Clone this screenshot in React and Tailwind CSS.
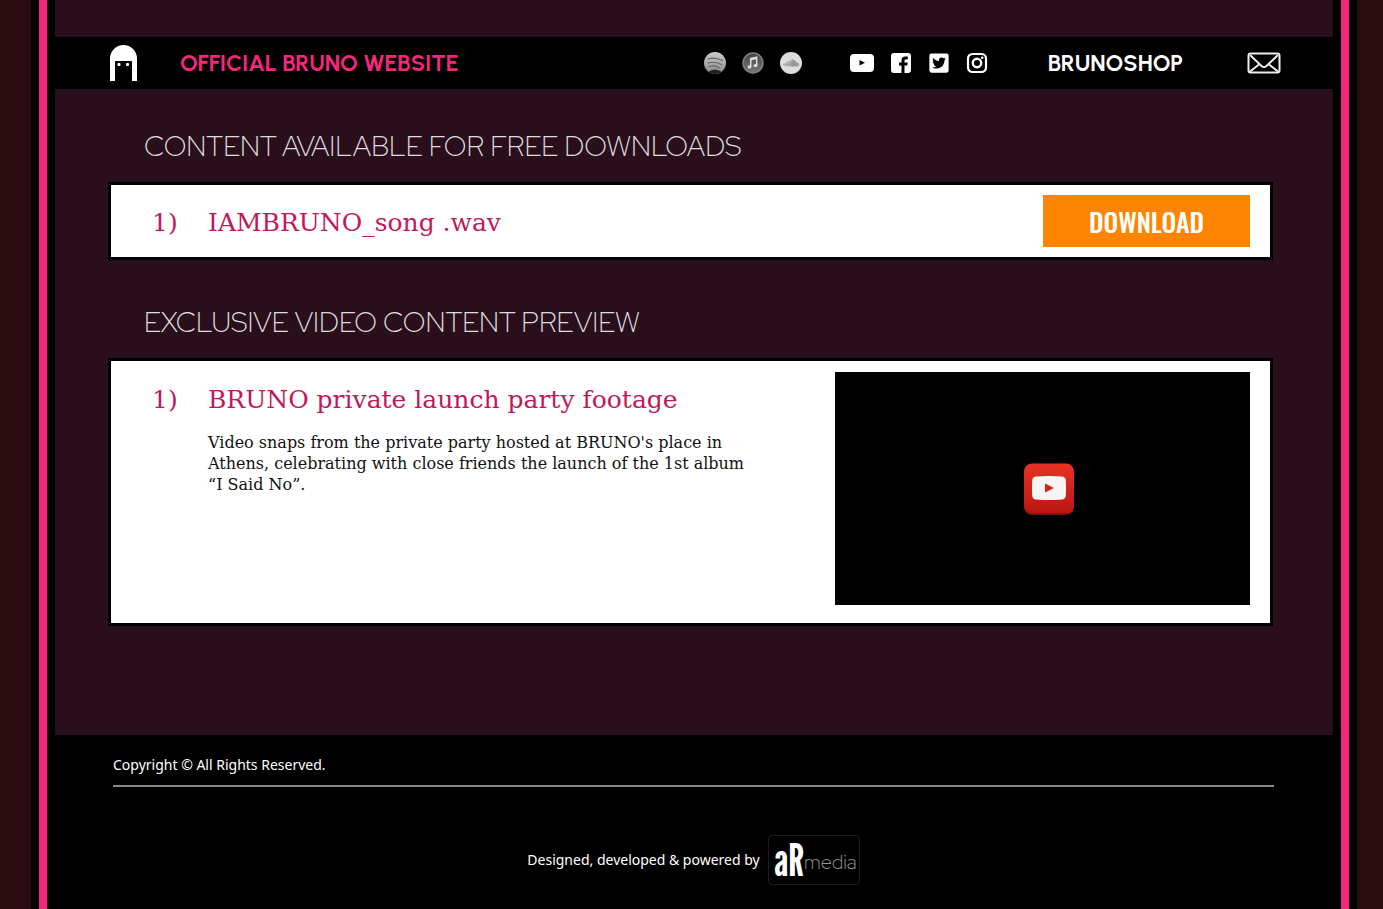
import { FaSoundcloud, FaTwitterSquare } from 'react-icons/fa';

const headingFont = "font-['Red_Hat_Display','Raleway','Lato',sans-serif]";
const navFont = "font-['Urbanist','Raleway','Lato',sans-serif]";
const slabFont = "font-['DejaVu_Serif','Liberation_Serif',serif]";
const narrowFont = "font-['Oswald','DejaVu_Sans_Condensed',sans-serif]";

const BrunoLogo = () => (
  <svg viewBox="0 0 27 36" className="h-9 w-[27px]" aria-hidden="true">
    <path d="M0 36V13.500a13.500 13.500 0 0 1 27 0V36h-5V16h-17v20z" fill="#fff" />
    <rect x="7.500" y="18" width="3" height="3" rx="1" fill="#fff" />
    <rect x="16" y="18" width="3" height="3" rx="1" fill="#fff" />
  </svg>
);

const SpotifyIcon = () => (
  <span className="block size-[22px] overflow-hidden rounded-full bg-linear-to-b from-[#ccc] to-[#888]">
    <svg viewBox="0 0 22 22" fill="none" strokeLinecap="round" aria-hidden="true">
      <path d="M4 7q7-2.500 14.500 1.500M4 11q7-2 13 1.500M5 14.500q6-1.500 10.500 1.200" stroke="#666" strokeWidth="1.200" />
      <path d="M4 20q7-5 14 0l-2 3H6z" fill="#222" />
    </svg>
  </span>
);

const ItunesIcon = () => (
  <svg viewBox="0 0 22 22" className="size-[22px]" aria-hidden="true">
    <defs>
      <linearGradient id="itunes" x1="0" y1="0" x2="0" y2="1">
        <stop offset="0" stopColor="#444" />
        <stop offset="1" stopColor="#777" />
      </linearGradient>
    </defs>
    <circle cx="11" cy="11" r="10" fill="url(#itunes)" stroke="#808080" strokeWidth="1.500" />
    <path d="M8.700 14.500V6.600l6-1.300v8" fill="none" stroke="#ddd" strokeWidth="1.500" />
    <path d="M8.700 7.400l6-1.300" stroke="#ddd" strokeWidth="2" />
    <ellipse cx="7.500" cy="14.900" rx="2" ry="1.700" fill="#ddd" />
    <ellipse cx="13.500" cy="13.600" rx="2" ry="1.700" fill="#ddd" />
  </svg>
);

const YoutubeIcon = () => (
  <svg viewBox="0 0 24 22" className="h-[22px] w-6" aria-hidden="true">
    <rect y="2" width="24" height="18" rx="4" fill="#fff" />
    <path d="M9.500 8v5.500l5.500-2.700z" fill="#000" />
  </svg>
);

const FacebookIcon = () => (
  <svg viewBox="0 0 22 22" className="size-[22px]" aria-hidden="true">
    <rect x="1" y="1" width="20" height="20" rx="3" fill="#fff" />
    <path d="M11.500 21v-7.500H9v-3h2.500V8.300q0-3.800 3.800-3.800h2.500v2.800H16q-1.500 0-1.500 1.500v1.700h3.200l-.4 3h-2.800V21z" fill="#000" />
  </svg>
);

const InstagramIcon = () => (
  <svg viewBox="0 0 22 22" className="size-[22px]" fill="none" stroke="#fff" aria-hidden="true">
    <rect x="2" y="2" width="18" height="18" rx="4.500" strokeWidth="2.200" />
    <circle cx="11" cy="11" r="4.200" strokeWidth="2.400" />
    <circle cx="16.200" cy="5.800" r="1.300" fill="#fff" stroke="none" />
  </svg>
);

const MailIcon = () => (
  <svg viewBox="0 0 34 22" className="h-[22px] w-[34px]" fill="none" stroke="#eee" aria-hidden="true">
    <rect x="1.500" y="1.500" width="31" height="19" rx="2" strokeWidth="2" />
    <path d="M3 3l11.500 11q2.500 2 5 0L31 3M3 19.500l9-7M31 19.500l-9-7" strokeWidth="2" />
  </svg>
);

const PlayIcon = () => (
  <svg viewBox="0 0 52 52" className="size-[52px]" aria-hidden="true">
    <defs>
      <linearGradient id="play" x1="0" y1="0" x2="0" y2="1">
        <stop offset="0" stopColor="#e93323" />
        <stop offset="1" stopColor="#b81613" />
      </linearGradient>
    </defs>
    <rect x="1" y="1" width="50" height="51" rx="8" fill="#7c0d0c" />
    <rect x="1" y="0.500" width="50" height="50" rx="8" fill="url(#play)" />
    <path d="M13 13.500q13-1 26 0 3.500.300 3.800 4 .500 7.500 0 15-.300 3.700-3.800 4-13 1-26 0-3.500-.300-3.800-4-.500-7.500 0-15 .300-3.700 3.800-4z" fill="#f5f5f5" />
    <path d="M22 20.500v9l9-4.500z" fill="#d3201b" />
  </svg>
);

const Rail = () => (
  <div className="flex shrink-0 bg-black px-2">
    <div className="w-2 bg-[#f6267c]" />
  </div>
);

const Navbar = () => (
  <header className="flex h-[52px] items-center bg-black pr-[52px] pl-[55px] text-white">
    <a href="#home" aria-label="Bruno" className="mr-[43px]">
      <BrunoLogo />
    </a>
    <a href="#home" className={`${navFont} text-[23px] font-bold whitespace-nowrap text-[#f6267c]`}>
      OFFICIAL BRUNO WEBSITE
    </a>

    <nav className="ml-auto flex items-center">
      <div className="flex items-center gap-4">
        <a href="#spotify" aria-label="Spotify">
          <SpotifyIcon />
        </a>
        <a href="#itunes" aria-label="iTunes">
          <ItunesIcon />
        </a>
        <a
          href="#soundcloud"
          aria-label="SoundCloud"
          className="flex size-[22px] items-center justify-center rounded-full bg-[#ddd]"
        >
          <FaSoundcloud className="size-4 text-[#999]" />
        </a>
      </div>

      <div className="ml-12 flex items-center gap-4">
        <a href="#youtube" aria-label="YouTube">
          <YoutubeIcon />
        </a>
        <a href="#facebook" aria-label="Facebook">
          <FacebookIcon />
        </a>
        <a href="#twitter" aria-label="Twitter">
          <FaTwitterSquare className="size-[22px]" />
        </a>
        <a href="#instagram" aria-label="Instagram">
          <InstagramIcon />
        </a>
      </div>

      <a href="#shop" className={`${navFont} ml-[60px] text-[23px] font-bold`}>
        BRUNOSHOP
      </a>
      <a href="#contact" aria-label="Contact" className="ml-16">
        <MailIcon />
      </a>
    </nav>
  </header>
);

const SectionTitle = ({ children }) => (
  <h2 className={`${headingFont} px-9 text-[28px] leading-9 font-light text-[#ddd]`}>{children}</h2>
);

const App = () => {
  return (
    <div className="flex min-h-screen bg-[#2a0c10]">
      <div className="w-[31px] shrink-0" />
      <Rail />

      <div className="flex min-w-0 flex-1 flex-col bg-[#2a0e1b] pt-[37px]">
        <Navbar />

        <main className="flex-1 pt-[39px] pr-[60px] pb-[108px] pl-[53px]">
          {/* Downloads */}
          <section>
            <SectionTitle>CONTENT AVAILABLE FOR FREE DOWNLOADS</SectionTitle>
            <div className="mt-[18px] flex h-[78px] items-center border-3 border-black bg-white pr-5 pl-[41px]">
              <div className={`${slabFont} flex pt-1 text-[25px] leading-8 text-[#c2185b]`}>
                <span className="w-14">1)</span>
                <h3>IAMBRUNO_song .wav</h3>
              </div>
              <button className={`${narrowFont} ml-auto h-[52px] w-[207px] bg-[#ff8400] text-[26px] font-medium text-white`}>
                DOWNLOAD
              </button>
            </div>
          </section>

          {/* Videos */}
          <section className="mt-11">
            <SectionTitle>EXCLUSIVE VIDEO CONTENT PREVIEW</SectionTitle>
            <div className="mt-[18px] flex justify-between border-3 border-black bg-white pt-[11px] pr-5 pb-[18px] pl-[41px]">
              <div className={`${slabFont} flex pt-3`}>
                <span className="w-14 shrink-0 text-[25px] leading-8 text-[#c2185b]">1)</span>
                <div>
                  <h3 className="text-[25px] leading-8 text-[#c2185b]">BRUNO private launch party footage</h3>
                  <p className="mt-4 max-w-[545px] text-base leading-[21px] text-[#111]">
                    Video snaps from the private party hosted at BRUNO's place in Athens, celebrating with close
                    friends the launch of the 1st album “I Said No”.
                  </p>
                </div>
              </div>
              <button
                aria-label="Play video"
                className="flex h-[233px] w-[415px] shrink-0 items-center justify-center bg-black pl-3"
              >
                <PlayIcon />
              </button>
            </div>
          </section>
        </main>

        <footer className="bg-black pt-5 pr-[59px] pb-6 pl-[58px] font-['Noto_Sans','Open_Sans',sans-serif] text-sm text-white">
          <p className="border-b-2 border-[#888] pb-2.5 leading-5">Copyright © All Rights Reserved.</p>
          <div className="mt-12 flex items-center justify-center gap-2">
            <p>Designed, developed &amp; powered by</p>
            <a
              href="#armedia"
              className="flex h-[50px] w-[92px] items-center justify-end rounded-sm border border-[#1c1c1c] pr-0.5"
            >
              <span className="font-['League_Gothic','Oswald',sans-serif] text-[44px] leading-[48px]">aR</span>
              <span className={`${headingFont} pt-1 text-[20px] font-light text-[#999]`}>media</span>
            </a>
          </div>
        </footer>
      </div>

      <Rail />
      <div className="w-[26px] shrink-0" />
    </div>
  );
};

export default App;
